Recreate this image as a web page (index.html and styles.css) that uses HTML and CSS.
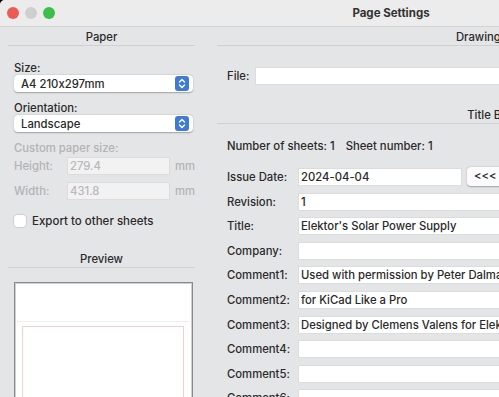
FILE: index.html
```html
<!DOCTYPE html>
<html>

<head>
    <title>Page Settings</title>
    <meta charset="utf-8">
    <link rel="stylesheet" href="styles.css">
</head>

<body>
    <div class="window">
        <header class="titlebar">
            <div class="lights">
                <span class="light red"></span>
                <span class="light grey"></span>
                <span class="light green"></span>
            </div>
            <div class="title">Page Settings</div>
            <div></div>
        </header>

        <main class="content">
            <!-- venstre kolonne: papir -->
            <section class="paper">
                <h2 class="group-title">Paper</h2>

                <div class="field-label">Size:</div>
                <div class="select">
                    <span>A4 210x297mm</span>
                    <svg class="stepper" width="14" height="15" viewBox="0 0 14 15">
                        <rect width="14" height="15" rx="3" fill="#3f7bd6" />
                        <path d="M4.5 6 L7 3.6 L9.5 6 M4.5 9 L7 11.4 L9.5 9" fill="none" stroke="#fff" stroke-width="1.4" stroke-linecap="round" stroke-linejoin="round" />
                    </svg>
                </div>

                <div class="field-label">Orientation:</div>
                <div class="select">
                    <span>Landscape</span>
                    <svg class="stepper" width="14" height="15" viewBox="0 0 14 15">
                        <rect width="14" height="15" rx="3" fill="#3f7bd6" />
                        <path d="M4.5 6 L7 3.6 L9.5 6 M4.5 9 L7 11.4 L9.5 9" fill="none" stroke="#fff" stroke-width="1.4" stroke-linecap="round" stroke-linejoin="round" />
                    </svg>
                </div>

                <div class="custom-title">Custom paper size:</div>
                <div class="custom-grid">
                    <span class="dim">Height:</span>
                    <div class="input disabled">279.4</div>
                    <span class="dim">mm</span>
                    <span class="dim">Width:</span>
                    <div class="input disabled">431.8</div>
                    <span class="dim">mm</span>
                </div>

                <div class="check-row">
                    <span class="checkbox"></span>
                    <span>Export to other sheets</span>
                </div>

                <h2 class="group-title preview-title">Preview</h2>
                <div class="preview">
                    <div class="preview-line"></div>
                    <div class="preview-frame"></div>
                </div>
            </section>

            <!-- højre kolonne: tegneark og titelblok -->
            <section class="sheet">
                <h2 class="group-title">Drawing Sheet</h2>
                <div class="file-row">
                    <span>File:</span>
                    <div class="input"></div>
                </div>

                <h2 class="group-title block-title">Title Block</h2>
                <div class="sheet-count">
                    <span>Number of sheets: 1</span>
                    <span class="sheet-number">Sheet number: 1</span>
                </div>

                <div class="block-grid">
                    <span>Issue Date:</span>
                    <div class="date-row">
                        <div class="input date">2024-04-04</div>
                        <div class="button">&lt;&lt;&lt;</div>
                        <div class="input date-pick"></div>
                    </div>
                    <span>Revision:</span>
                    <div class="input">1</div>
                    <span>Title:</span>
                    <div class="input">Elektor's Solar Power Supply</div>
                    <span>Company:</span>
                    <div class="input"></div>
                    <span>Comment1:</span>
                    <div class="input">Used with permission by Peter Dalmaris</div>
                    <span>Comment2:</span>
                    <div class="input">for KiCad Like a Pro</div>
                    <span>Comment3:</span>
                    <div class="input">Designed by Clemens Valens for Elektor</div>
                    <span>Comment4:</span>
                    <div class="input"></div>
                    <span>Comment5:</span>
                    <div class="input"></div>
                    <span>Comment6:</span>
                    <div class="input"></div>
                </div>
            </section>
        </main>
    </div>
</body>

</html>
```

FILE: styles.css
```css
body {
    margin: 0;
    background-color: #000;
    overflow: hidden;
    font-family: 'Inter', 'Liberation Sans', sans-serif;
    font-size: 11.3px;
    font-weight: 500;
    font-feature-settings: "calt" 0;
    color: #2a2a2a;
}

.window {
    width: 774px;
    height: 397px;
    overflow: hidden;
    background-color: #e4e5e7;
    border-top-left-radius: 5px;
}

.titlebar {
    height: 26px;
    padding-left: 8px;
    display: grid;
    grid-template-columns: 1fr auto 1fr;
    align-items: center;
    background-color: #ececec;
    border-bottom: 1px solid #d3d3d3;
}

.lights {
    display: flex;
    gap: 6px;
    margin-left: -1px;
}

.light {
    width: 12px;
    height: 12px;
    border-radius: 50%;
}

.red {
    background-color: #ec5b55;
}

.grey {
    background-color: #cfcfcf;
}

.green {
    background-color: #3cbf4a;
}

.title {
    font-weight: bold;
    font-size: 11.5px;
    color: #333;
}

.content {
    display: flex;
}

.group-title {
    margin: 2px 0 0;
    font-size: 11.3px;
    font-weight: 500;
    line-height: 16px;
    text-align: center;
    border-bottom: 1px solid #cfd0d2;
}

/* papir */

.paper {
    width: 187px;
    padding-left: 8px;
    padding-right: 15px;
}

.paper .field-label,
.paper .select,
.custom-title,
.custom-grid,
.check-row,
.preview {
    margin-left: 6px;
    margin-right: 2px;
}

.field-label {
    line-height: 14px;
}

.paper .group-title+.field-label {
    margin-top: 15px;
}

.select {
    height: 17px;
    display: flex;
    align-items: center;
    justify-content: space-between;
    padding: 0 4px 0 7px;
    background-color: #fff;
    border-radius: 4px;
    box-shadow: 0 0.5px 1.5px rgba(0, 0, 0, 0.3);
    margin-bottom: 9px;
}

.stepper {
    display: block;
}

.custom-title {
    margin-top: 2px;
    line-height: 14px;
    color: #b3b3b3;
}

.custom-grid {
    margin-top: 2px;
    display: grid;
    grid-template-columns: 48px 103px auto;
    grid-template-rows: 18px 18px;
    row-gap: 7px;
    column-gap: 5px;
    align-items: center;
}

.dim {
    color: #b3b3b3;
}

.input {
    height: 18px;
    box-sizing: border-box;
    padding: 0 3px;
    line-height: 18px;
    background-color: #fff;
    box-shadow: inset 0 0 0 1px #dcdcdc;
    white-space: nowrap;
    overflow: hidden;
}

.input.disabled {
    background-color: #f2f2f3;
    color: #b8b8b8;
}

.check-row {
    margin-top: 14px;
    height: 14px;
    display: flex;
    align-items: center;
    gap: 6px;
    font-size: 11.5px;
}

.checkbox {
    width: 12px;
    height: 12px;
    background-color: #fff;
    border-radius: 3px;
    box-shadow: 0 0 0 0.5px #b9b9b9;
}

.preview-title {
    margin-top: 23px;
}

.preview {
    margin-top: 14px;
    height: 140px;
    padding-top: 38px;
    background-color: #fff;
    border: 1px solid #8a8a8a;
    box-shadow: inset 0 0 0 1px #cfcfcf;
}

.preview-line {
    margin: 0 2px;
    border-top: 1px solid #efefef;
}

.preview-frame {
    margin: 4px 8px 0 7px;
    height: 80px;
    border: 1px solid #f1d0d0;
}

/* tegneark og titelblok */

.sheet {
    flex: 1;
    padding-left: 7px;
}

.file-row {
    margin: 21px 0 0 10px;
    display: flex;
    align-items: center;
    gap: 6px;
}

.file-row .input {
    flex: 1;
}

.block-title {
    margin-top: 22px;
}

.sheet-count {
    margin: 15px 0 0 10px;
    line-height: 14px;
}

.sheet-number {
    margin-left: 8px;
}

.block-grid {
    margin: 15px 10px 0 10px;
    display: grid;
    grid-template-columns: 71px 1fr;
    grid-auto-rows: 18px;
    row-gap: 6.6px;
    align-items: center;
}

.date-row {
    display: flex;
    gap: 5px;
}

.input.date {
    width: 164px;
}

.button {
    width: 44px;
    height: 19px;
    margin-top: -1px;
    box-sizing: border-box;
    padding-left: 7px;
    line-height: 19px;
    background-color: #fbfbfb;
    border-radius: 4px;
    box-shadow: 0 0.5px 1.5px rgba(0, 0, 0, 0.3);
}

.input.date-pick {
    flex: 1;
}
```
